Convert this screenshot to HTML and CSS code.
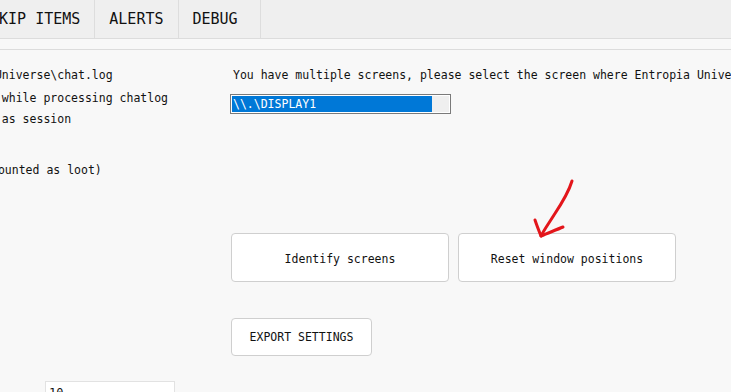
FILE: index.html
```html
<!DOCTYPE html>
<html lang="en">
<head>
  <meta charset="utf-8">
  <title>Settings</title>
  <link rel="stylesheet" href="styles.css">
</head>
<body>
  <nav class="tabs">
    <div class="tab">SKIP ITEMS</div>
    <div class="tab">ALERTS</div>
    <div class="tab">DEBUG</div>
  </nav>
  <div class="subbar"></div>

  <main class="content">
    <section class="left-col">
      <div class="line line-log"> Universe\chat.log</div>
      <div class="line line-error">r while processing chatlog</div>
      <div class="line line-session">n as session</div>
      <div class="line line-loot">counted as loot)</div>
      <div class="number-input">10</div>
    </section>

    <section class="right-col">
      <p class="screen-hint">You have multiple screens, please select the screen where Entropia Universe is running</p>
      <div class="listbox">
        <div class="option selected">\\.\DISPLAY1</div>
        <div class="listbox-rest"></div>
      </div>

      <div class="button-row">
        <button class="big-button">Identify screens</button>
        <button class="big-button">Reset window positions</button>
      </div>

      <button class="export-button">EXPORT SETTINGS</button>
    </section>
  </main>

  <!-- hand drawn annotation -->
  <svg class="annotation" width="70" height="70" viewBox="0 0 70 70">
    <path d="M52 6 C49 16 42 28 34 40 C29 48 24 55 21 61" />
    <path d="M15 45 C17 51 19 56 21 61 C28 58 36 55 43 52" />
  </svg>
</body>
</html>
```

FILE: styles.css
```css
body {
  margin: 0;
  background: #f8f8f8;
  color: #111111;
  font-family: 'DejaVu Sans Mono', 'Liberation Mono', monospace;
  font-size: 11.5px;
  overflow: hidden;
  height: 392px;
  position: relative;
}

.tabs {
  display: flex;
  height: 38px;
  background: #efefef;
  border-bottom: 1px solid #dcdcdc;
  margin-left: -24px;
}

.tab {
  box-sizing: border-box;
  min-width: 82px;
  padding: 0 14px;
  font-size: 15px;
  line-height: 38px;
  border-right: 1px solid #dddddd;
  white-space: nowrap;
}

.subbar {
  height: 10px;
  border-bottom: 1px solid #dcdcdc;
}

.content {
  display: flex;
  margin-left: -12px;
}

.left-col {
  width: 242px;
  flex-shrink: 0;
  padding-top: 17px;
  line-height: 16px;
}

.line {
  white-space: pre;
}

.line-error {
  margin-top: 7px;
}

.line-session {
  margin-top: 5px;
}

.line-loot {
  margin-top: 35px;
  padding-left: 3px;
}

.number-input {
  margin: 203px 0 0 57px;
  width: 130px;
  height: 22px;
  background: white;
  border: 1px solid #e2e2e2;
  padding: 3px 3px;
  box-sizing: border-box;
  line-height: 16px;
  font-size: 12px;
}

.right-col {
  padding-top: 17px;
}

.screen-hint {
  margin: 0 0 0 3px;
  line-height: 16px;
  white-space: nowrap;
}

.listbox {
  display: flex;
  width: 221px;
  height: 20px;
  margin-top: 11px;
  border: 1px solid #7a7a7a;
  padding: 1px;
  box-sizing: border-box;
  background: white;
}

.option {
  width: 200px;
  line-height: 16px;
  padding-left: 1px;
  box-sizing: border-box;
  white-space: nowrap;
}

.option.selected {
  background: #0078d7;
  color: white;
}

.listbox-rest {
  flex: 1;
  background: #efefef;
}

.button-row {
  display: flex;
  gap: 9px;
  margin: 119px 0 0 1px;
}

.big-button,
.export-button {
  font-family: inherit;
  font-size: 11.5px;
  color: #111111;
  background: white;
  border: 1px solid #cfcfcf;
  border-radius: 4px;
  cursor: pointer;
}

.big-button {
  width: 218px;
  height: 49px;
  padding-top: 3px;
}

.export-button {
  display: block;
  width: 141px;
  height: 38px;
  margin: 36px 0 0 1px;
}

.annotation {
  position: absolute;
  left: 520px;
  top: 175px;
  fill: none;
  stroke: #e3161b;
  stroke-width: 3;
  stroke-linecap: round;
  stroke-linejoin: round;
}
```
